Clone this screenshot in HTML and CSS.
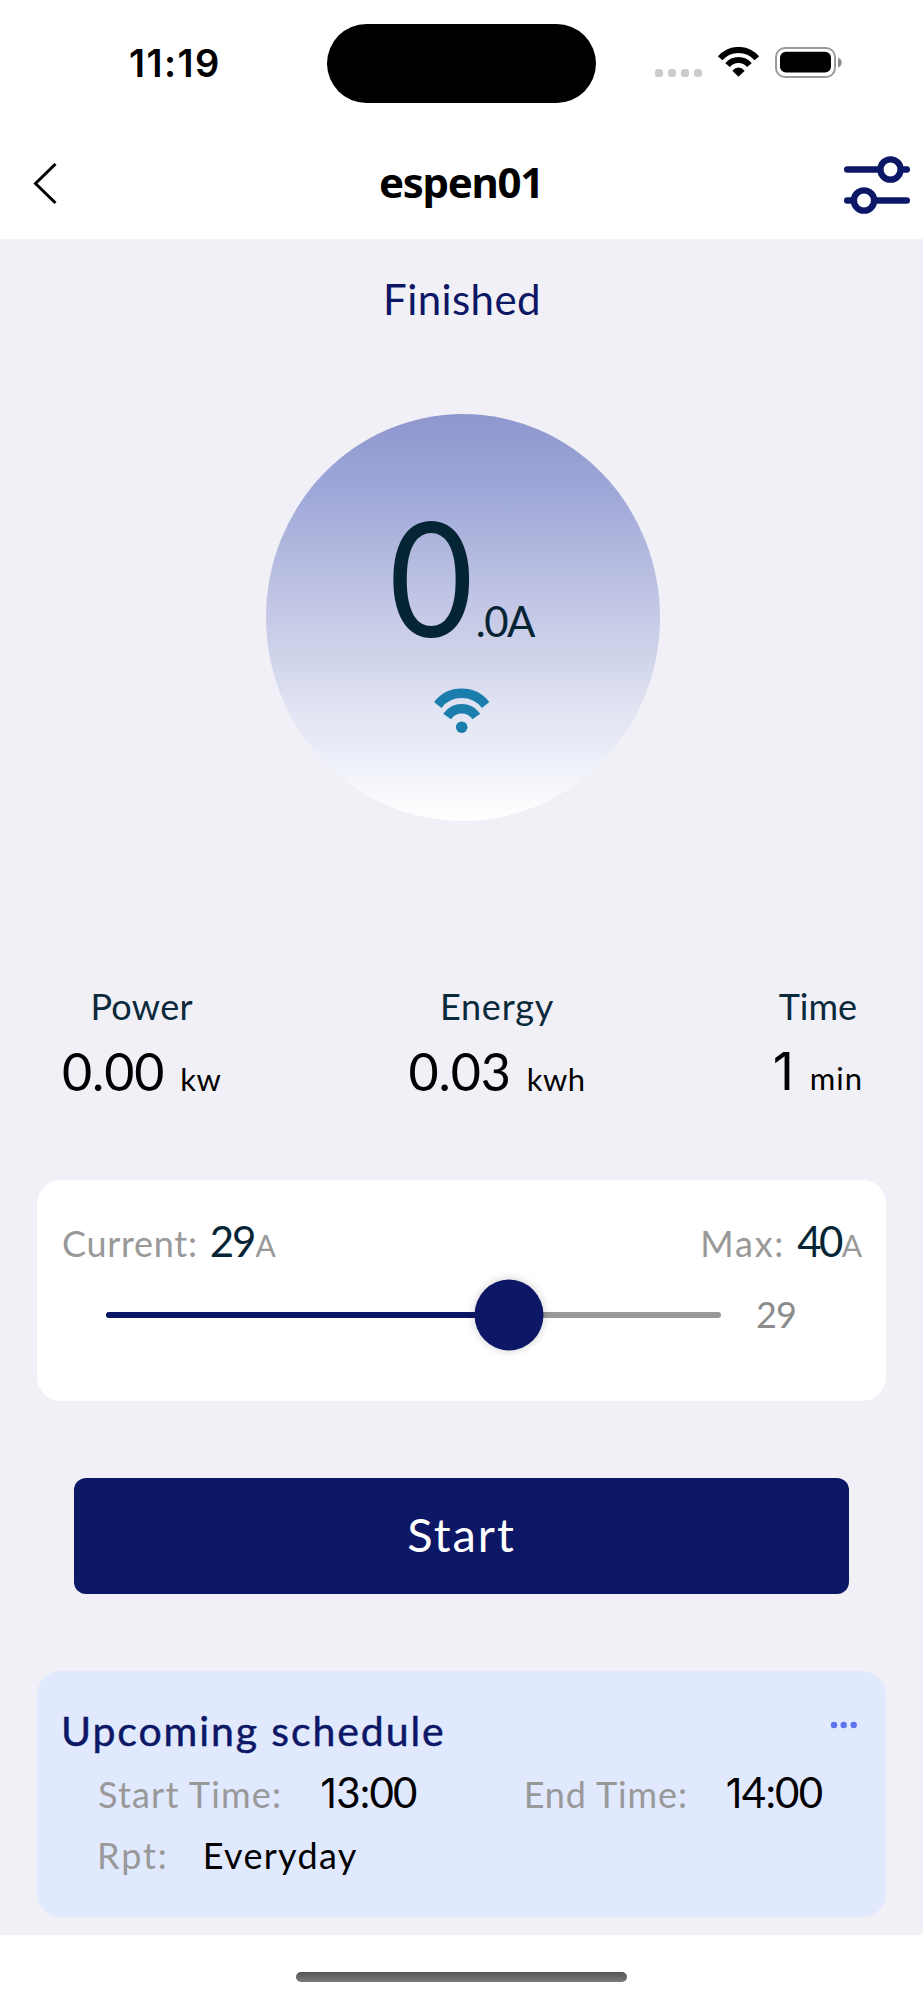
FILE: index.html
```html
<!DOCTYPE html>
<html lang="en">
<head>
<meta charset="utf-8">
<title>espen01</title>
<link rel="stylesheet" href="styles.css">
</head>
<body>
<header class="status-bar">
  <time class="clock">11:19</time>
  <div class="island"></div>
  <div class="indicators">
    <div class="signal"><i></i><i></i><i></i><i></i></div>
    <svg class="wifi-small" width="41" height="30" viewBox="0 0 41 30">
      <g fill="none" stroke="#000" stroke-width="6">
        <path d="M2.2 11.4A24 24 0 0 1 38.8 11.4"/>
        <path d="M9.6 18.2A14 14 0 0 1 31.4 18.2"/>
      </g>
      <path d="M14.3 23.8Q20.5 17 26.7 23.8L20.5 29.8Z"/>
    </svg>
    <svg class="battery" width="67" height="31" viewBox="0 0 67 31">
      <rect x="1" y="1" width="59" height="29" rx="9" fill="none" stroke="#9b9b9b" stroke-width="2"/>
      <rect x="5" y="4.8" width="51" height="20.7" rx="6" fill="#000"/>
      <path d="M63 10.5Q66.7 12 66.7 15.5T63 20.5Z" fill="#8c8c8c"/>
    </svg>
  </div>
</header>
<nav class="nav">
  <svg class="back" width="24" height="42" viewBox="0 0 24 42"><path d="M22.5 1L2.5 20.5L22.5 40" fill="none" stroke="#000" stroke-width="3"/></svg>
  <h1 class="nav-title">espen01</h1>
  <svg class="filters" width="67" height="58" viewBox="0 0 67 58">
    <g fill="none" stroke="#0c1766" stroke-width="6.4" stroke-linecap="round">
      <path d="M3.2 13.5H35M60 13.5H62.8M3.2 44.5H8M33 44.5H62.8"/>
      <circle cx="46.5" cy="13.5" r="10.1"/>
      <circle cx="20" cy="44.5" r="10.1"/>
    </g>
  </svg>
</nav>
<main class="main">
  <p class="state">Finished</p>
  <section class="dial">
    <div class="reading"><span class="whole">0</span><span class="fraction">.0A</span></div>
    <svg class="dial-wifi" width="56" height="46" viewBox="0 0 56 46">
      <g fill="none" stroke="#1b7dab" stroke-width="9.4">
        <path d="M3.8 17A30.3 30.3 0 0 1 51.6 17"/>
        <path d="M13.1 28.5A17.7 17.7 0 0 1 42.3 28.5"/>
      </g>
      <circle cx="27.7" cy="39.2" r="5.8" fill="#1b7dab"/>
    </svg>
  </section>
  <section class="metrics">
    <div class="metric"><div class="metric-label">Power</div><div class="metric-value"><b>0.00</b><small>kw</small></div></div>
    <div class="metric"><div class="metric-label energy">Energy</div><div class="metric-value"><b>0.03</b><small>kwh</small></div></div>
    <div class="metric"><div class="metric-label time">Time</div><div class="metric-value"><b class="one">1</b><small class="min">min</small></div></div>
  </section>
  <section class="card limit">
    <div class="limit-row">
      <div class="amps"><span class="amps-label">Current:</span><b>29</b><small>A</small></div>
      <div class="amps max"><span class="amps-label">Max:</span><b>40</b><small>A</small></div>
    </div>
    <div class="slider">
      <div class="track"><div class="track-fill"></div><div class="thumb"></div></div>
      <span class="slider-value">29</span>
    </div>
  </section>
  <button class="start">Start</button>
  <section class="card schedule">
    <div class="schedule-head">
      <h2>Upcoming schedule</h2>
      <svg class="more" width="28" height="8" viewBox="0 0 28 8" fill="#5c74ee"><circle cx="4" cy="4" r="3.2"/><circle cx="13.7" cy="4" r="3.2"/><circle cx="23.7" cy="4" r="3.2"/></svg>
    </div>
    <div class="times">
      <div class="pair"><span class="key">Start Time:</span><span class="clock-value"><span class="one">1</span>3:00</span></div>
      <div class="pair end"><span class="key">End Time:</span><span class="clock-value"><span class="one">1</span>4:00</span></div>
    </div>
    <div class="pair repeat"><span class="key">Rpt:</span><span class="repeat-value">Everyday</span></div>
  </section>
</main>
<footer class="footer"><div class="home-bar"></div></footer>
</body>
</html>
```

FILE: styles.css
```css
* { box-sizing: border-box; margin: 0; padding: 0; }
body { width: 923px; height: 2000px; background: #fff; font-family: Lato, sans-serif; color: #000; overflow: hidden; }
svg { display: block; flex: none; }
b, small, h2 { font-weight: 400; }

.status-bar { display: grid; grid-template-columns: 327px 269px 1fr; align-items: start; height: 128px; }
.clock { margin: 43px 0 0 129px; font: 600 38px/40px Inter, sans-serif; letter-spacing: 1.4px; }
.island { height: 79px; margin-top: 24px; border-radius: 40px; background: #000; }
.indicators { display: flex; align-items: flex-start; padding: 47px 0 0 59px; }
.signal { display: flex; gap: 5px; margin-top: 22px; }
.signal i { width: 8px; height: 8px; border-radius: 3px; background: #ccc; }
.wifi-small { margin-left: 16px; }
.battery { margin-left: 16px; }

.nav { display: grid; grid-template-columns: 1fr auto 1fr; align-items: center; height: 111px; padding: 0 12px 0 33px; }
.nav-title { padding-bottom: 4px; margin-left: -22px; font: 700 42px/50px "Noto Sans", sans-serif; letter-spacing: -1.3px; }
.filters { justify-self: end; margin-top: 3px; }

.main { height: 1696px; padding-top: 35px; background: #f1f0f6; }
.state { text-align: center; font-size: 42px; line-height: 50px; letter-spacing: .4px; padding-left: 1px; color: #0c1766; }

.dial {
  width: 394px; height: 407px; margin: 90px 0 0 266px; padding-top: 101px; border-radius: 50%;
  background: linear-gradient(#8d97ce 0%, #a2aada 22%, #b1b8de 33%, #c3c7e6 47%, #d0d4ea 60%, #dfe2f1 71%, #ebeef8 84%, #f5f6fb 91%, #fff 100%);
}
.reading { display: flex; align-items: baseline; height: 120px; padding-left: 123px; line-height: 120px; color: #052434; }
.whole { font-size: 160px; transform: scaleX(.91); transform-origin: left; }
.fraction { margin-left: -6px; font-size: 42px; letter-spacing: -1.5px; }
.dial-wifi { margin: 53px 0 0 168px; }

.metrics { display: flex; justify-content: space-between; margin-top: 163px; padding: 0 60px 0 62px; }
.metric-label { text-align: center; font-size: 36px; line-height: 44px; letter-spacing: .3px; color: #0a2a3c; }
.energy { letter-spacing: .8px; }
.time { letter-spacing: -.1px; }
.metric-value { display: flex; align-items: baseline; height: 59px; margin-top: 13px; line-height: 60px; }
.metric-value b { font-size: 52px; letter-spacing: -.1px; }
.metric-value small { margin-left: 16px; font-size: 31px; letter-spacing: .4px; }
.metric-value .one { font-family: Inter, sans-serif; line-height: 62px; }
.metric-value .min { letter-spacing: 1px; }

.card { margin: 0 37px; border-radius: 24px; }
.limit { height: 221px; margin-top: 80px; padding: 36px 24px 0 25px; background: #fff; }
.limit-row { display: flex; justify-content: space-between; }
.amps { display: flex; align-items: baseline; height: 50px; line-height: 50px; color: #999; }
.amps-label { font-size: 36px; letter-spacing: .7px; }
.amps b { margin-left: 12px; font-size: 42px; letter-spacing: -2px; color: #052434; }
.amps small { margin-left: 1px; font-size: 30px; }
.max .amps-label { letter-spacing: 1.8px; }
.max b { letter-spacing: -2.6px; }
.slider { display: flex; align-items: center; height: 72px; margin-top: 13px; padding-left: 44px; }
.track { position: relative; width: 615px; height: 6px; border-radius: 3px; background: #999; }
.track-fill { width: 65.6%; height: 6px; border-radius: 3px; background: #0c1766; }
.thumb { position: absolute; left: 65.6%; top: 50%; width: 69px; height: 71px; border-radius: 50%; background: #0c1766; transform: translate(-50%, -50%); box-shadow: 0 0 10px rgba(0, 0, 0, .2); }
.slider-value { margin: 0 0 3px 35px; font-size: 36px; letter-spacing: -.9px; color: #8c8c8c; }

.start { display: block; width: 775px; height: 116px; margin: 77px 0 0 74px; padding-bottom: 5px; border: 0; border-radius: 12px; background: #0c1766; color: #fff; font: 400 47px/60px Lato, sans-serif; letter-spacing: 2px; }

.schedule { height: 246px; margin-top: 77px; padding: 36px 28px 0 24px; background: #e1e9ff; }
.schedule-head { display: flex; justify-content: space-between; }
.schedule-head h2 { font-size: 41px; line-height: 48px; letter-spacing: 1.9px; color: #0c1766; -webkit-text-stroke: .5px #0c1766; }
.more { margin-top: 14px; }
.times { display: flex; margin-top: 13px; padding-left: 37px; }
.pair { display: flex; align-items: baseline; height: 48px; line-height: 48px; }
.key { font-size: 36px; letter-spacing: 1.2px; color: #999; }
.clock-value { margin-left: 38px; font-size: 42px; letter-spacing: -.8px; }
.clock-value .one { display: inline-block; width: 16px; font-family: Inter, sans-serif; font-size: 41px; }
.end { margin-left: 107px; }
.end .key { letter-spacing: .9px; }
.repeat { margin-top: 15px; padding-left: 36px; }
.repeat .key { letter-spacing: 1.9px; }
.repeat-value { margin-left: 34px; font-size: 36px; letter-spacing: 1.3px; }

.footer { height: 65px; padding-top: 37px; }
.home-bar { width: 331px; height: 10px; margin: 0 auto; border-radius: 5px; background: linear-gradient(#555, #7a7a7a); }
```
